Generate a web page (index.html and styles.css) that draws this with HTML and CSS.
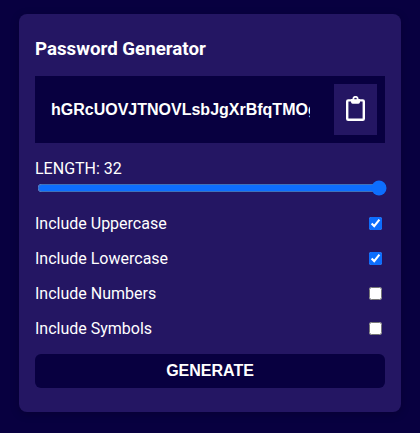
FILE: index.html
```html
<!DOCTYPE html>
<html lang="en">
<head>
<meta charset="utf-8">
<title>Password Generator</title>
<link rel="stylesheet" href="styles.css">
</head>
<body>
<main class="card">
  <h3 class="title">Password Generator</h3>
  <div class="display">
    <input class="password" type="text" value="hGRcUOVJTNOVLsbJgXrBfqTMOgKw" aria-label="Password" readonly>
    <button class="copy" type="button" aria-label="Copy">
      <svg width="19" height="25" viewBox="0 0 19 25" fill="none">
        <rect x="1.2" y="4.4" width="16.6" height="19.4" rx="1" stroke="#fff" stroke-width="2.4"/>
        <path fill="#fff" fill-rule="evenodd" d="M5 3h1.4a3.1 3.1 0 0 1 6.2 0H14v3a1.7 1.7 0 0 1-1.7 1.7H6.7A1.7 1.7 0 0 1 5 6zM9.5 1.8a1.3 1.3 0 1 0 0 2.6a1.3 1.3 0 0 0 0-2.6z"/>
      </svg>
    </button>
  </div>
  <label class="length" for="length">LENGTH: 32</label>
  <input class="slider" id="length" type="range" min="4" max="32" value="32">
  <div class="options">
    <label class="option">Include Uppercase<input type="checkbox" checked></label>
    <label class="option">Include Lowercase<input type="checkbox" checked></label>
    <label class="option">Include Numbers<input type="checkbox"></label>
    <label class="option">Include Symbols<input type="checkbox"></label>
  </div>
  <button class="generate" type="button">GENERATE</button>
</main>
</body>
</html>
```
FILE: styles.css
```css
* { box-sizing: border-box; }
body {
  margin: 0;
  padding: 14px 19px 21px;
  background: #080040;
  color: #fff;
  font: 16px/19px Roboto, sans-serif;
}
.card {
  display: flex;
  flex-direction: column;
  height: 398px;
  padding: 24px 16px;
  border-radius: 8px;
  background: #241663;
  box-shadow: 0 2px 10px rgba(0, 0, 0, 0.2);
}
.title {
  margin: 0 0 15px;
  font-size: 18.72px;
  line-height: 23px;
}
.display {
  display: flex;
  flex: none;
  align-items: center;
  justify-content: space-between;
  height: 67px;
  padding: 8px 8px 8px 16px;
  background: #080040;
}
.password {
  width: 259px;
  padding: 0;
  border: 0;
  background: transparent;
  color: #fff;
  font: bold 16px/19px "Liberation Sans", Arial, sans-serif;
}
.copy {
  display: flex;
  align-items: center;
  justify-content: center;
  width: 43px;
  height: 51px;
  padding: 0 0 2px;
  border: 0;
  background: #241663;
}
.length { margin-top: 16px; }
.slider {
  width: 350px;
  height: 16px;
  margin: 2px;
  accent-color: #0d6efd;
}
.options {
  display: flex;
  flex-direction: column;
  gap: 16px;
  margin-top: 16px;
}
.option {
  display: flex;
  align-items: center;
  justify-content: space-between;
  height: 19px;
}
.option input {
  width: 13px;
  height: 13px;
  margin: 3px;
  accent-color: #0d6efd;
}
.generate {
  flex: none;
  height: 34px;
  margin-top: 16px;
  padding: 0;
  border: 0;
  border-radius: 6px;
  background: #080040;
  color: #fff;
  font: bold 16px/18px "Liberation Sans", Arial, sans-serif;
}
```
